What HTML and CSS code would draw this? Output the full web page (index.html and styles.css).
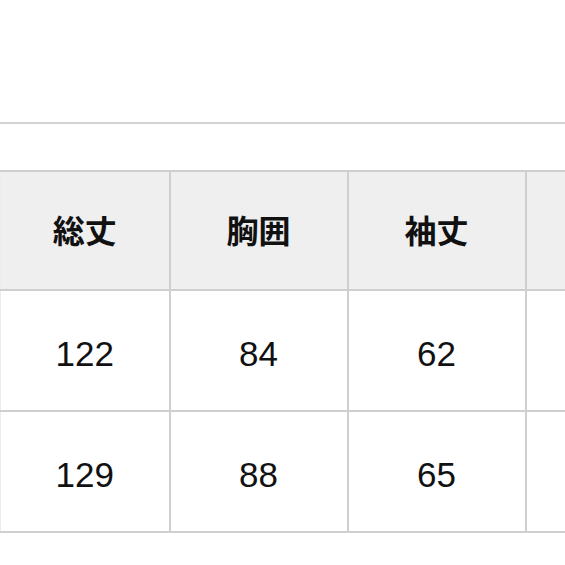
FILE: index.html
```html
<!DOCTYPE html>
<html lang="ja">
<head>
<meta charset="utf-8">
<link rel="stylesheet" href="styles.css">
</head>
<body>
<div class="top"></div>
<div class="wrap">
<table class="size">
<colgroup><col class="c1"><col class="c"><col class="c"><col class="c"></colgroup>
<thead>
<tr><th>総丈</th><th>胸囲</th><th>袖丈</th><th></th></tr>
</thead>
<tbody>
<tr><td>122</td><td>84</td><td>62</td><td></td></tr>
<tr><td>129</td><td>88</td><td>65</td><td></td></tr>
</tbody>
</table>
</div>
</body>
</html>
```
FILE: styles.css
```css
html, body {
  margin: 0;
  padding: 0;
  background: #fff;
  overflow: hidden;
}
body {
  width: 565px;
  height: 565px;
  font-family: "Liberation Sans", "Noto Sans CJK JP", sans-serif;
  color: #111;
}
.top {
  height: 122px;
  border-bottom: 2px solid #d2d2d2;
}
.wrap {
  padding-top: 46px;
  width: 565px;
  overflow: hidden;
}
.size {
  border-collapse: collapse;
  table-layout: fixed;
  width: 703px;
  border-top: 2px solid #cfcfcf;
  border-left: 1px solid #ececec;
}
.c1 { width: 169px; }
.c { width: 178px; }
.size th, .size td {
  border-right: 2px solid #cfcfcf;
  border-bottom: 2px solid #cfcfcf;
  text-align: center;
  padding: 0;
  box-sizing: border-box;
}
.size th {
  height: 119px;
  padding-bottom: 4px;
  background: #efefef;
  font-family: "Noto Sans CJK JP", sans-serif;
  font-weight: 700;
  font-size: 32px;
}
.size td {
  height: 121px;
  padding-top: 6px;
  font-size: 35px;
  font-weight: 400;
}
```
